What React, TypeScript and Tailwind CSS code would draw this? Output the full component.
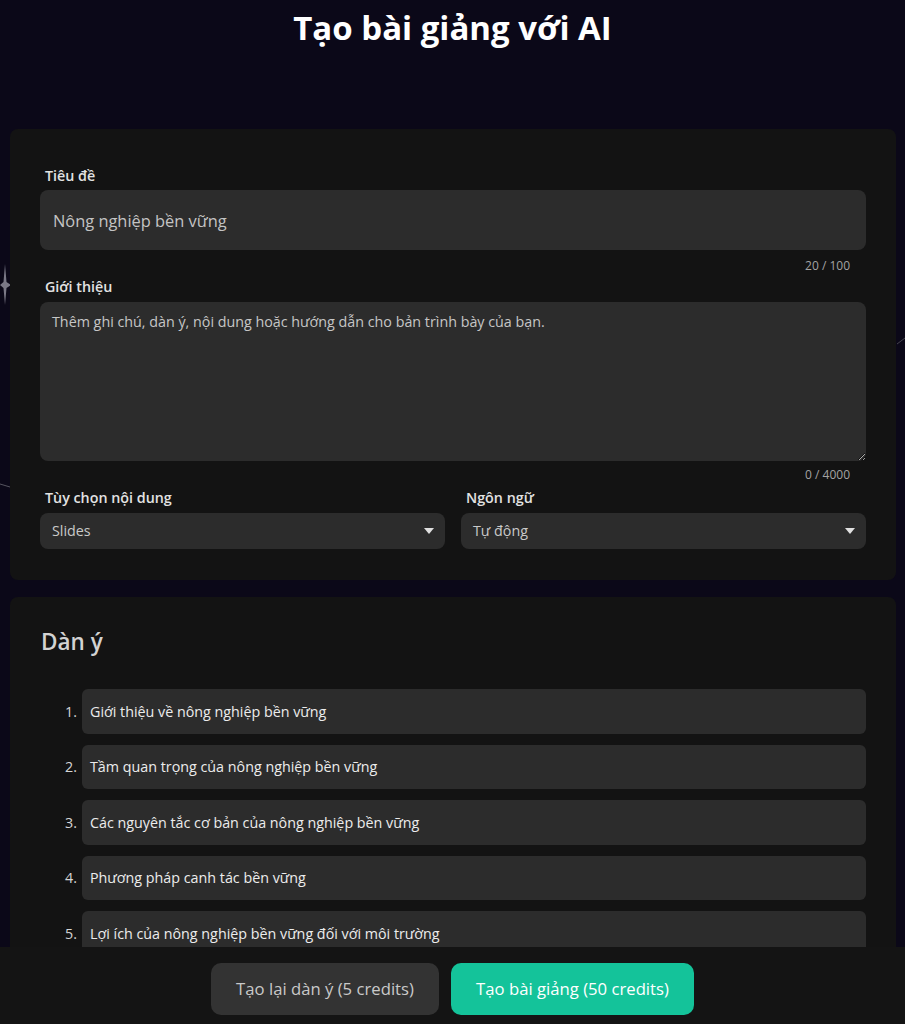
import { useState } from "react";

const OUTLINE = [
  "Giới thiệu về nông nghiệp bền vững",
  "Tầm quan trọng của nông nghiệp bền vững",
  "Các nguyên tắc cơ bản của nông nghiệp bền vững",
  "Phương pháp canh tác bền vững",
  "Lợi ích của nông nghiệp bền vững đối với môi trường",
];

function Caret() {
  return (
    <svg width="10" height="6" viewBox="0 0 10 6" className="shrink-0">
      <path d="M0 0 L10 0 L5 6 Z" fill="#e0e0e0" />
    </svg>
  );
}

function SelectBox({ label, value }: { label: string; value: string }) {
  return (
    <div className="flex-1 min-w-0">
      <div className="ml-[5px] mb-[5px] text-[14.3px] leading-5 font-semibold text-[#e2e2e2]">{label}</div>
      <button className="w-full h-9 rounded-lg bg-[#2c2c2c] pl-3 pr-[11px] flex items-center justify-between text-[14.3px] text-[#c9c9c9]">
        <span>{value}</span>
        <Caret />
      </button>
    </div>
  );
}

export default function App() {
  const [title, setTitle] = useState("Nông nghiệp bền vững");
  const [intro, setIntro] = useState("");

  return (
    <div className="h-screen flex flex-col bg-[#0b0818] font-['Open_Sans',sans-serif] overflow-hidden">
      <div className="relative flex-1 min-h-0 overflow-hidden">
        {/* background sparkles */}
        <svg className="absolute inset-0 w-full h-full pointer-events-none" viewBox="0 0 905 947" preserveAspectRatio="none">
          <path d="M5 264 L6.5 282 L11 285 L6.5 288 L5 305 L3.5 288 L0 285 L3.5 282 Z" fill="#7a7886" />
          <path d="M0 484 L10 487" stroke="#56545f" strokeWidth="1" />
          <path d="M897 344 L905 338" stroke="#46444f" strokeWidth="1" />
        </svg>

        <h1 className="relative text-center text-[33px] leading-[44px] pt-[6px] font-bold text-white">
          Tạo bài giảng với AI
        </h1>

        <div className="relative mt-[79px] ml-[10px] mr-[9px] flex flex-col gap-[17px]">
          {/* form card */}
          <section className="rounded-lg bg-[#131313] px-[30px] pt-[37px] pb-[31px]">
            <label className="block ml-[5px] mb-1 text-[14.3px] leading-5 font-semibold text-[#e2e2e2]">Tiêu đề</label>
            <input
              value={title}
              onChange={(e) => setTitle(e.target.value)}
              className="w-full h-[60px] rounded-lg bg-[#2c2c2c] px-[13px] text-[16.4px] text-[#c4c4c4] outline-none"
            />
            <div className="mt-2 pr-4 text-right text-xs leading-4 text-[#a3a3a3]">{title.length} / 100</div>

            <label className="block mt-[3px] ml-[5px] mb-[5px] text-[14.3px] leading-5 font-semibold text-[#e2e2e2]">Giới thiệu</label>
            <textarea
              value={intro}
              onChange={(e) => setIntro(e.target.value)}
              placeholder="Thêm ghi chú, dàn ý, nội dung hoặc hướng dẫn cho bản trình bày của bạn."
              className="block w-full h-[159px] rounded-lg bg-[#2c2c2c] px-3 py-[9px] text-[14.3px] text-[#d0d0d0] placeholder:text-[#c6c6c6] outline-none"
            />
            <div className="mt-[6px] pr-4 text-right text-xs leading-4 text-[#a3a3a3]">{intro.length} / 4000</div>

            <div className="mt-[5px] flex gap-4">
              <SelectBox label="Tùy chọn nội dung" value="Slides" />
              <SelectBox label="Ngôn ngữ" value="Tự động" />
            </div>
          </section>

          {/* outline card */}
          <section className="rounded-lg bg-[#131313] px-[30px] pt-[29px] pb-8">
            <h2 className="ml-px text-[22.5px] leading-8 font-semibold text-[#d2d2d2]">Dàn ý</h2>
            <ol className="mt-[31px] flex flex-col gap-[11px]">
              {OUTLINE.map((item, i) => (
                <li key={i} className="flex items-center">
                  <span className="w-[42px] pr-[5px] text-right text-[14.3px] text-[#d6d6d6]">{i + 1}.</span>
                  <div className="flex-1 h-[44.5px] rounded-md bg-[#2c2c2c] px-2 flex items-center text-[14.3px] text-[#ececec]">
                    {item}
                  </div>
                </li>
              ))}
            </ol>
          </section>
        </div>
      </div>

      <footer className="h-[77px] shrink-0 bg-[#141414] flex justify-center items-start pt-4 gap-3">
        <button className="h-[52px] w-[228px] rounded-[10px] bg-[#333333] text-[16.7px] text-[#c9c9c9]">
          Tạo lại dàn ý (5 credits)
        </button>
        <button className="h-[52px] w-[243px] rounded-[10px] bg-[#14c39a] text-[16.7px] text-white">
          Tạo bài giảng (50 credits)
        </button>
      </footer>
    </div>
  );
}
